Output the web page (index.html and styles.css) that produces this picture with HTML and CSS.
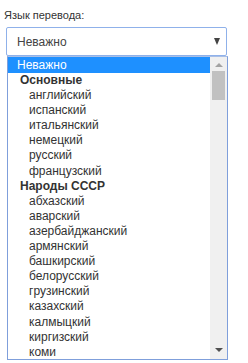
FILE: index.html
```html
<!DOCTYPE html>
<html>
<head>
<meta charset="utf-8">
<link rel="stylesheet" href="styles.css">
</head>
<body>
<div class="field">
  <div class="label">Язык перевода:</div>
  <div class="select">
    <span class="value">Неважно</span>
    <span class="arrow"></span>
  </div>
  <div class="dropdown">
    <div class="options">
      <div class="opt sel">Неважно</div>
      <div class="grp">Основные</div>
      <div class="opt in">английский</div>
      <div class="opt in">испанский</div>
      <div class="opt in">итальянский</div>
      <div class="opt in">немецкий</div>
      <div class="opt in">русский</div>
      <div class="opt in">французский</div>
      <div class="grp">Народы СССР</div>
      <div class="opt in">абхазский</div>
      <div class="opt in">аварский</div>
      <div class="opt in">азербайджанский</div>
      <div class="opt in">армянский</div>
      <div class="opt in">башкирский</div>
      <div class="opt in">белорусский</div>
      <div class="opt in">грузинский</div>
      <div class="opt in">казахский</div>
      <div class="opt in">калмыцкий</div>
      <div class="opt in">киргизский</div>
      <div class="opt in">коми</div>
    </div>
    <div class="scrollbar">
      <span class="up"></span>
      <span class="thumb"></span>
      <span class="down"></span>
    </div>
  </div>
  <div class="check"></div>
</div>
</body>
</html>
```
FILE: styles.css
```css
html, body {
  margin: 0;
  padding: 0;
  background: #fff;
}
body {
  font-family: "Liberation Sans", Arial, sans-serif;
  color: #333;
}
.field {
  display: flex;
  flex-direction: column;
  padding: 9px 0 0 4px;
}
.label {
  font-size: 11px;
  line-height: 13px;
  color: #333;
  height: 18px;
}
.select {
  margin-left: 2px;
  border: 1px solid #8fb1ea;
  border-radius: 2px;
  display: flex;
  align-items: center;
  justify-content: space-between;
  box-sizing: border-box;
  width: 221px;
  height: 29px;
  padding: 0 6px 0 10px;
}
.value {
  font-size: 12px;
  color: #444;
}
.arrow {
  width: 0;
  height: 0;
  border-left: 3.5px solid transparent;
  border-right: 3.5px solid transparent;
  border-top: 7px solid #444;
}
.dropdown {
  margin-left: 3px;
  width: 221px;
  height: 304px;
  box-sizing: border-box;
  border: 1px solid #7f9fdb;
  border-top-color: #a9bfe6;
  display: flex;
  overflow: hidden;
}
.options {
  flex: 1;
  font-size: 12px;
  color: #333;
}
.opt, .grp {
  height: 15.1px;
  line-height: 15px;
  white-space: nowrap;
}
.opt { padding-left: 9px; }
.opt.in { padding-left: 21px; }
.grp {
  font-weight: bold;
  padding-left: 12px;
  color: #333;
}
.sel {
  background: #1e90ff;
  color: #fff;
  height: 16px;
  line-height: 16px;
}
.scrollbar {
  width: 17px;
  background: #f0f0f0;
  display: flex;
  flex-direction: column;
  align-items: center;
}
.up {
  margin-top: 6px;
  width: 0;
  height: 0;
  border-left: 4px solid transparent;
  border-right: 4px solid transparent;
  border-bottom: 4px solid #a3a3a3;
}
.thumb {
  margin-top: 4px;
  width: 13px;
  height: 29px;
  background: #c1c1c1;
}
.down {
  margin-top: auto;
  margin-bottom: 7px;
  width: 0;
  height: 0;
  border-left: 4px solid transparent;
  border-right: 4px solid transparent;
  border-top: 4px solid #505050;
}
.check {
  margin: 3px 0 0 4px;
  width: 5px;
  height: 2px;
  background: #c8c8c8;
}
```
